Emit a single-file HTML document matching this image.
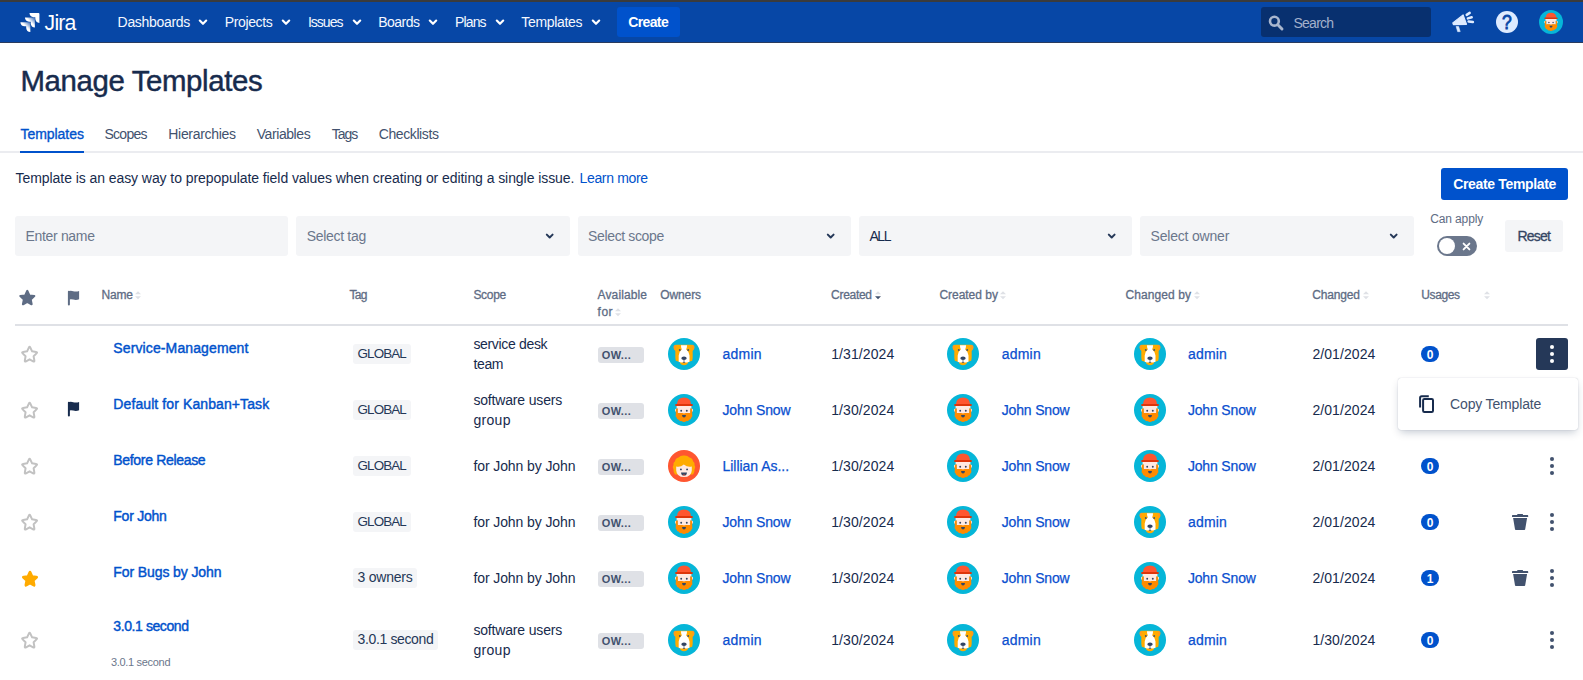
<!DOCTYPE html>
<html lang="en"><head><meta charset="utf-8"><title>Manage Templates - Jira</title>
<style>
html,body{margin:0;padding:0;background:#fff;}
body{width:1583px;height:680px;overflow:hidden;position:relative;font-family:"Liberation Sans",Arial,sans-serif;}
.t{position:absolute;white-space:nowrap;display:block;}
.b{position:absolute;display:block;}
svg{position:absolute;display:block;overflow:visible;}
</style></head><body>
<div class="b" style="left:0px;top:0px;width:1583px;height:2px;background:#3b3b3b;"></div>
<div class="b" style="left:0px;top:2px;width:1583px;height:40px;background:#0747A6;"></div>
<div class="b" style="left:0px;top:42px;width:1583px;height:1px;background:#2a3b5e;"></div>
<svg style="left:19.200px;top:10.900px" width="22" height="22" viewBox="0 0 32 32">
<defs>
<linearGradient id="jg1" x1="22.0" y1="9.7" x2="16.3" y2="15.5" gradientUnits="userSpaceOnUse"><stop offset="0.15" stop-color="#fff" stop-opacity="0.35"/><stop offset="1" stop-color="#fff"/></linearGradient>
<linearGradient id="jg2" x1="15.4" y1="16.3" x2="9.7" y2="22.1" gradientUnits="userSpaceOnUse"><stop offset="0.15" stop-color="#fff" stop-opacity="0.35"/><stop offset="1" stop-color="#fff"/></linearGradient>
</defs>
<path d="M28.5 3H15.200c0 3.300 2.700 6 6 6h2.500v2.400c0 3.300 2.700 6 6 6V4.200c0-.7-.5-1.200-1.200-1.200z" fill="#fff"/>
<path d="M21.900 9.600H8.600c0 3.300 2.700 6 6 6h2.500v2.400c0 3.300 2.700 6 6 6V10.800c0-.7-.5-1.200-1.200-1.200z" fill="url(#jg1)"/>
<path d="M15.300 16.200H2c0 3.300 2.700 6 6 6h2.500v2.400c0 3.300 2.700 6 6 6V17.400c0-.7-.6-1.200-1.200-1.200z" fill="url(#jg2)"/>
</svg>
<span class="t" style="left:44.60px;top:11px;font-size:21.2px;line-height:23px;color:#fff;letter-spacing:-0.787px;">Jira</span>
<span class="t" style="left:117.60px;top:14px;font-size:14px;line-height:16px;color:#F4F8FF;letter-spacing:-0.321px;">Dashboards</span>
<svg style="left:197.20px;top:17.65px" width="12.0" height="8.7" viewBox="-2 -2 12.0 8.7"><path d="M0.8 0.6 L4.0 3.8000000000000003 L7.2 0.6" fill="none" stroke="#fff" stroke-width="2.2" stroke-linecap="round" stroke-linejoin="round"/></svg>
<span class="t" style="left:224.70px;top:14px;font-size:14px;line-height:16px;color:#F4F8FF;letter-spacing:-0.353px;">Projects</span>
<svg style="left:280.00px;top:17.65px" width="12.0" height="8.7" viewBox="-2 -2 12.0 8.7"><path d="M0.8 0.6 L4.0 3.8000000000000003 L7.2 0.6" fill="none" stroke="#fff" stroke-width="2.2" stroke-linecap="round" stroke-linejoin="round"/></svg>
<span class="t" style="left:307.90px;top:14px;font-size:14px;line-height:16px;color:#F4F8FF;letter-spacing:-0.972px;">Issues</span>
<svg style="left:351.00px;top:17.65px" width="12.0" height="8.7" viewBox="-2 -2 12.0 8.7"><path d="M0.8 0.6 L4.0 3.8000000000000003 L7.2 0.6" fill="none" stroke="#fff" stroke-width="2.2" stroke-linecap="round" stroke-linejoin="round"/></svg>
<span class="t" style="left:378.20px;top:14px;font-size:14px;line-height:16px;color:#F4F8FF;letter-spacing:-0.532px;">Boards</span>
<svg style="left:427.20px;top:17.65px" width="12.0" height="8.7" viewBox="-2 -2 12.0 8.7"><path d="M0.8 0.6 L4.0 3.8000000000000003 L7.2 0.6" fill="none" stroke="#fff" stroke-width="2.2" stroke-linecap="round" stroke-linejoin="round"/></svg>
<span class="t" style="left:455.00px;top:14px;font-size:14px;line-height:16px;color:#F4F8FF;letter-spacing:-0.855px;">Plans</span>
<svg style="left:493.50px;top:17.65px" width="12.0" height="8.7" viewBox="-2 -2 12.0 8.7"><path d="M0.8 0.6 L4.0 3.8000000000000003 L7.2 0.6" fill="none" stroke="#fff" stroke-width="2.2" stroke-linecap="round" stroke-linejoin="round"/></svg>
<span class="t" style="left:521.30px;top:14px;font-size:14px;line-height:16px;color:#F4F8FF;letter-spacing:-0.326px;">Templates</span>
<svg style="left:589.50px;top:17.65px" width="12.0" height="8.7" viewBox="-2 -2 12.0 8.7"><path d="M0.8 0.6 L4.0 3.8000000000000003 L7.2 0.6" fill="none" stroke="#fff" stroke-width="2.2" stroke-linecap="round" stroke-linejoin="round"/></svg>
<div class="b" style="left:617px;top:7px;width:63px;height:30px;background:#0052CC;border-radius:3px;"></div>
<span class="t" style="left:628.20px;top:14px;font-size:14px;line-height:16px;color:#fff;font-weight:700;letter-spacing:-0.616px;">Create</span>
<div class="b" style="left:1261px;top:7px;width:170px;height:30px;background:#08306F;border-radius:3px;"></div>
<svg style="left:1267px;top:14px" width="18" height="18" viewBox="0 0 18 18"><circle cx="7.4" cy="7.2" r="4.4" fill="none" stroke="#A9B6CE" stroke-width="2.600"/><path d="M10.800 10.700 L15 15" stroke="#A9B6CE" stroke-width="2.900" stroke-linecap="round"/></svg>
<span class="t" style="left:1293.50px;top:15px;font-size:14px;line-height:16px;color:#A3B1CB;letter-spacing:-0.752px;">Search</span>
<svg style="left:1448px;top:8px" width="30" height="28" viewBox="1448 8 30 28">
<path d="M1452.800 22.900 L1463.100 14.900 L1466.500 24.300 L1453.400 24.600 Z" fill="#DEEBFF" stroke="#DEEBFF" stroke-width="1.200" stroke-linejoin="round"/>
<path d="M1456.100 26.500 L1458.600 26.500 L1460.200 31.600 L1457.700 31.700 Z" fill="#DEEBFF" stroke="#DEEBFF" stroke-width="0.6" stroke-linejoin="round"/>
<path d="M1466.700 14.900 L1469.700 12.900 M1467.900 18.400 L1471.700 17.300 M1468.600 21.400 L1472.900 22.100" stroke="#DEEBFF" stroke-width="2.500" stroke-linecap="round" fill="none"/>
</svg>
<div class="b" style="left:1496.200px;top:11.100px;width:21.8px;height:21.8px;border-radius:50%;background:#DEEBFF"></div>
<span class="t" style="left:1502.10px;top:11px;font-size:19.5px;line-height:22px;color:#0747A6;-webkit-text-stroke:0.8px #0747A6;transform:scaleX(0.9);transform-origin:0 0;">?</span>
<svg style="left:1539.00px;top:9.80px" width="24" height="24" viewBox="0 0 32 32">
<circle cx="16" cy="16" r="16" fill="#06B6D8"/>
<rect x="7" y="14.800" width="2.200" height="3" rx="1" fill="#FFE3DA"/><rect x="22.800" y="14.800" width="2.200" height="3" rx="1" fill="#FFE3DA"/>
<path d="M8.300 14.200 L9.900 14.200 L9.900 19 L22.100 19 L22.100 14.200 L23.700 14.200 Q24.600 17 24.200 20.500 Q25 22.500 23.400 23.600 Q23.300 25.600 21.200 25.800 Q20.500 27.500 18.500 27.100 Q16 29 13.500 27.100 Q11.500 27.500 10.800 25.800 Q8.700 25.600 8.600 23.600 Q7 22.500 7.800 20.500 Q7.400 17 8.300 14.200 Z" fill="#FF8B00"/>
<rect x="8.600" y="11.800" width="14.800" height="2.600" fill="#FFE9E2"/><rect x="9.900" y="11.800" width="12.200" height="7.600" fill="#FFE9E2"/>
<path d="M9.900 19 L14.300 19 Q16 20.800 17.700 19 L22.100 19 L22.100 20 L9.900 20 Z" fill="#FF8B00"/>
<path d="M8.900 10.300 Q9.300 3.500 16 3.500 Q22.700 3.500 23.100 10.300 Z" fill="#FF5630"/>
<rect x="7.200" y="10.100" width="17.600" height="2" rx="0.8" fill="#DE350B"/>
<circle cx="13.200" cy="16.700" r="0.95" fill="#344563"/><circle cx="18.800" cy="16.700" r="0.95" fill="#344563"/>
<path d="M14 21 L18 21 Q17.800 23.500 16 23.500 Q14.200 23.500 14 21 Z" fill="#344563"/>
</svg>
<span class="t" style="left:20.40px;top:64px;font-size:29.4px;line-height:33px;color:#172B4D;letter-spacing:-0.365px;-webkit-text-stroke:0.45px #172B4D;">Manage Templates</span>
<div class="b" style="left:0px;top:151px;width:1583px;height:2px;background:#EBECF0;"></div>
<div class="b" style="left:20px;top:151px;width:64px;height:2px;background:#0052CC;"></div>
<span class="t" style="left:20.50px;top:126px;font-size:14px;line-height:16px;color:#0052CC;letter-spacing:-0.051px;-webkit-text-stroke:0.35px #0052CC;">Templates</span>
<span class="t" style="left:104.40px;top:126px;font-size:14px;line-height:16px;color:#42526E;letter-spacing:-0.699px;">Scopes</span>
<span class="t" style="left:168.30px;top:126px;font-size:14px;line-height:16px;color:#42526E;letter-spacing:-0.310px;">Hierarchies</span>
<span class="t" style="left:256.70px;top:126px;font-size:14px;line-height:16px;color:#42526E;letter-spacing:-0.416px;">Variables</span>
<span class="t" style="left:331.80px;top:126px;font-size:14px;line-height:16px;color:#42526E;letter-spacing:-1.057px;">Tags</span>
<span class="t" style="left:378.70px;top:126px;font-size:14px;line-height:16px;color:#42526E;letter-spacing:-0.399px;">Checklists</span>
<span class="t" style="left:15.60px;top:170px;font-size:14px;line-height:16px;color:#172B4D;letter-spacing:-0.068px;">Template is an easy way to prepopulate field values when creating or editing a single issue.</span>
<span class="t" style="left:579.50px;top:170px;font-size:14px;line-height:16px;color:#0052CC;letter-spacing:-0.344px;">Learn more</span>
<div class="b" style="left:1441px;top:168px;width:127px;height:32px;background:#0052CC;border-radius:3px;"></div>
<span class="t" style="left:1453.20px;top:176px;font-size:14px;line-height:16px;color:#fff;font-weight:700;letter-spacing:-0.342px;">Create Template</span>
<div class="b" style="left:15px;top:216px;width:273px;height:40px;background:#F4F5F7;border-radius:3px;"></div>
<span class="t" style="left:25.40px;top:228px;font-size:14px;line-height:16px;color:#6B778C;letter-spacing:-0.308px;">Enter name</span>
<div class="b" style="left:296px;top:216px;width:274px;height:40px;background:#F4F5F7;border-radius:3px;"></div>
<span class="t" style="left:306.80px;top:228px;font-size:14px;line-height:16px;color:#6B778C;letter-spacing:-0.318px;">Select tag</span>
<svg style="left:544.40px;top:232.30px" width="11.4" height="8.4" viewBox="-2 -2 11.4 8.4"><path d="M0.8 0.6 L3.7 3.5000000000000004 L6.6000000000000005 0.6" fill="none" stroke="#253858" stroke-width="2.0" stroke-linecap="round" stroke-linejoin="round"/></svg>
<div class="b" style="left:578px;top:216px;width:273px;height:40px;background:#F4F5F7;border-radius:3px;"></div>
<span class="t" style="left:588.10px;top:228px;font-size:14px;line-height:16px;color:#6B778C;letter-spacing:-0.369px;">Select scope</span>
<svg style="left:825.40px;top:232.30px" width="11.4" height="8.4" viewBox="-2 -2 11.4 8.4"><path d="M0.8 0.6 L3.7 3.5000000000000004 L6.6000000000000005 0.6" fill="none" stroke="#253858" stroke-width="2.0" stroke-linecap="round" stroke-linejoin="round"/></svg>
<div class="b" style="left:859px;top:216px;width:273px;height:40px;background:#F4F5F7;border-radius:3px;"></div>
<span class="t" style="left:869.40px;top:228px;font-size:14px;line-height:16px;color:#172B4D;letter-spacing:-1.405px;">ALL</span>
<svg style="left:1106.40px;top:232.30px" width="11.4" height="8.4" viewBox="-2 -2 11.4 8.4"><path d="M0.8 0.6 L3.7 3.5000000000000004 L6.6000000000000005 0.6" fill="none" stroke="#253858" stroke-width="2.0" stroke-linecap="round" stroke-linejoin="round"/></svg>
<div class="b" style="left:1140px;top:216px;width:274px;height:40px;background:#F4F5F7;border-radius:3px;"></div>
<span class="t" style="left:1150.60px;top:228px;font-size:14px;line-height:16px;color:#6B778C;letter-spacing:-0.203px;">Select owner</span>
<svg style="left:1388.40px;top:232.30px" width="11.4" height="8.4" viewBox="-2 -2 11.4 8.4"><path d="M0.8 0.6 L3.7 3.5000000000000004 L6.6000000000000005 0.6" fill="none" stroke="#253858" stroke-width="2.0" stroke-linecap="round" stroke-linejoin="round"/></svg>
<span class="t" style="left:1430.20px;top:212px;font-size:12px;line-height:14px;color:#5E6C84;letter-spacing:-0.117px;">Can apply</span>
<div class="b" style="left:1437px;top:236px;width:40px;height:20px;background:#6B778C;border-radius:10px;"></div>
<div class="b" style="left:1438.800px;top:237.600px;width:16.500px;height:16.500px;border-radius:50%;background:#fff"></div>
<svg style="left:1460.800px;top:240.600px" width="11" height="11" viewBox="0 0 11 11"><path d="M2.600 2.600 L8.400 8.400 M8.400 2.600 L2.600 8.400" stroke="#fff" stroke-width="1.900" stroke-linecap="round"/></svg>
<div class="b" style="left:1505px;top:220px;width:58px;height:32px;background:#F4F5F7;border-radius:3px;"></div>
<span class="t" style="left:1517.40px;top:228px;font-size:14px;line-height:16px;color:#344563;letter-spacing:-0.768px;-webkit-text-stroke:0.3px #344563;">Reset</span>
<svg style="left:16.60px;top:288.45px" width="20.60" height="20.60" viewBox="16.60 288.45 20.60 20.60"><path d="M26.90 291.45 L28.96 295.92 L33.84 296.49 L30.23 299.83 L31.19 304.66 L26.90 302.25 L22.61 304.66 L23.57 299.83 L19.96 296.49 L24.84 295.92 Z" fill="#5E6C84" stroke="#5E6C84" stroke-width="2.2" stroke-linejoin="round"/></svg>
<svg style="left:66.8px;top:289.6px" width="14" height="17" viewBox="0 0 14 17"><path d="M1.900 1.800 L1.900 14.500" stroke="#5E6C84" stroke-width="2.000" stroke-linecap="round"/><path d="M1.400 1.300 Q3.500 0.500 6.200 1.200 Q9.300 2.000 12.100 0.900 L12.100 9.300 Q9.300 10.400 6.200 9.600 Q3.500 8.900 1.400 9.800 Z" fill="#5E6C84"/></svg>
<span class="t" style="left:101.50px;top:288px;font-size:12px;line-height:14px;color:#5E6C84;letter-spacing:-0.170px;-webkit-text-stroke:0.3px #5E6C84;">Name</span>
<svg style="left:135.3px;top:291px" width="6" height="9" viewBox="0 0 6 9"><path d="M0 3.200 L3 0.300 L6 3.200 Z" fill="#DFE1E6"/><path d="M0 5.300 L3 8.300 L6 5.300 Z" fill="#DFE1E6"/></svg>
<span class="t" style="left:349.40px;top:288px;font-size:12px;line-height:14px;color:#5E6C84;letter-spacing:-0.624px;-webkit-text-stroke:0.3px #5E6C84;">Tag</span>
<span class="t" style="left:473.40px;top:288px;font-size:12px;line-height:14px;color:#5E6C84;letter-spacing:-0.306px;-webkit-text-stroke:0.3px #5E6C84;">Scope</span>
<span class="t" style="left:597.60px;top:288px;font-size:12px;line-height:14px;color:#5E6C84;letter-spacing:0.115px;-webkit-text-stroke:0.3px #5E6C84;">Available</span>
<span class="t" style="left:597.60px;top:305px;font-size:12px;line-height:14px;color:#5E6C84;letter-spacing:0.498px;-webkit-text-stroke:0.3px #5E6C84;">for</span>
<svg style="left:614.5px;top:308px" width="6" height="9" viewBox="0 0 6 9"><path d="M0 3.200 L3 0.300 L6 3.200 Z" fill="#DFE1E6"/><path d="M0 5.300 L3 8.300 L6 5.300 Z" fill="#DFE1E6"/></svg>
<span class="t" style="left:660.30px;top:288px;font-size:12px;line-height:14px;color:#5E6C84;letter-spacing:-0.129px;-webkit-text-stroke:0.3px #5E6C84;">Owners</span>
<span class="t" style="left:831.10px;top:288px;font-size:12px;line-height:14px;color:#5E6C84;letter-spacing:-0.299px;-webkit-text-stroke:0.3px #5E6C84;">Created</span>
<svg style="left:875px;top:291px" width="6" height="9" viewBox="0 0 6 9"><path d="M0 3.200 L3 0.300 L6 3.200 Z" fill="#DFE1E6"/><path d="M0 5.300 L3 8.300 L6 5.300 Z" fill="#42526E"/></svg>
<span class="t" style="left:939.40px;top:288px;font-size:12px;line-height:14px;color:#5E6C84;letter-spacing:-0.022px;-webkit-text-stroke:0.3px #5E6C84;">Created by</span>
<svg style="left:1000.4px;top:291px" width="6" height="9" viewBox="0 0 6 9"><path d="M0 3.200 L3 0.300 L6 3.200 Z" fill="#DFE1E6"/><path d="M0 5.300 L3 8.300 L6 5.300 Z" fill="#DFE1E6"/></svg>
<span class="t" style="left:1125.60px;top:288px;font-size:12px;line-height:14px;color:#5E6C84;letter-spacing:0.076px;-webkit-text-stroke:0.3px #5E6C84;">Changed by</span>
<svg style="left:1193.5px;top:291px" width="6" height="9" viewBox="0 0 6 9"><path d="M0 3.200 L3 0.300 L6 3.200 Z" fill="#DFE1E6"/><path d="M0 5.300 L3 8.300 L6 5.300 Z" fill="#DFE1E6"/></svg>
<span class="t" style="left:1312.30px;top:288px;font-size:12px;line-height:14px;color:#5E6C84;letter-spacing:-0.168px;-webkit-text-stroke:0.3px #5E6C84;">Changed</span>
<svg style="left:1362.5px;top:291px" width="6" height="9" viewBox="0 0 6 9"><path d="M0 3.200 L3 0.300 L6 3.200 Z" fill="#DFE1E6"/><path d="M0 5.300 L3 8.300 L6 5.300 Z" fill="#DFE1E6"/></svg>
<span class="t" style="left:1421.30px;top:288px;font-size:12px;line-height:14px;color:#5E6C84;letter-spacing:-0.398px;-webkit-text-stroke:0.3px #5E6C84;">Usages</span>
<svg style="left:1484px;top:291px" width="6" height="9" viewBox="0 0 6 9"><path d="M0 3.200 L3 0.300 L6 3.200 Z" fill="#DFE1E6"/><path d="M0 5.300 L3 8.300 L6 5.300 Z" fill="#DFE1E6"/></svg>
<div class="b" style="left:15px;top:324px;width:1553px;height:2px;background:#DFE1E6;"></div>
<svg style="left:18.05px;top:343.46px" width="23.20" height="23.89" viewBox="18.05 343.46 23.20 23.89"><path d="M28.90 348.07 Q29.65 346.46 30.40 348.07 L32.15 351.82 L36.12 352.39 Q37.83 352.64 36.59 353.88 L33.69 356.77 L34.40 360.87 Q34.70 362.64 33.19 361.79 L29.65 359.82 L26.11 361.79 Q24.60 362.64 24.90 360.87 L25.61 356.77 L22.71 353.88 Q21.47 352.64 23.18 352.39 L27.15 351.82 Z" fill="#fff" stroke="#C2C2C2" stroke-width="2.0" stroke-linejoin="round"/></svg>
<span class="t" style="left:113.30px;top:340px;font-size:14px;line-height:16px;color:#0052CC;letter-spacing:0.120px;-webkit-text-stroke:0.42px #0052CC;">Service-Management</span>
<div class="b" style="left:353px;top:344px;width:58px;height:20px;background:#F4F5F7;border-radius:3px;"></div>
<span class="t" style="left:357.60px;top:346px;font-size:13.4px;line-height:15px;color:#253858;letter-spacing:-0.905px;">GLOBAL</span>
<span class="t" style="left:473.40px;top:336px;font-size:14px;line-height:16px;color:#172B4D;letter-spacing:-0.328px;">service desk</span>
<span class="t" style="left:473.40px;top:356px;font-size:14px;line-height:16px;color:#172B4D;letter-spacing:-0.341px;">team</span>
<div class="b" style="left:598px;top:347.4px;width:46px;height:15.200000000000045px;background:#DFE1E6;border-radius:3px;"></div>
<span class="t" style="left:601.80px;top:349px;font-size:11px;line-height:12px;color:#42526E;font-weight:700;letter-spacing:0.350px;">OW...</span>
<svg style="left:668.00px;top:338.00px" width="32" height="32" viewBox="0 0 32 32">
<circle cx="16" cy="16" r="16" fill="#06B6D8"/>
<path d="M8.600 6.800 Q5.300 6.300 5.500 9.800 Q5.800 12.500 7.900 12.900 L9.200 9 Z" fill="#FF991F"/>
<path d="M23.400 6.800 Q26.700 6.300 26.500 9.800 Q26.200 12.500 24.100 12.900 L22.800 9 Z" fill="#FF991F"/>
<path d="M8 7.200 Q8.400 6.600 9.500 6.700 L22.500 6.700 Q23.600 6.600 24 7.200 Q24.900 11.500 24.700 16.500 Q24.900 20.500 24.200 22.800 L20.300 24.100 Q19.800 27.200 16 27.300 Q12.200 27.200 11.700 24.100 L7.800 22.800 Q7.100 20.500 7.300 16.500 Q7.100 11.500 8 7.200 Z" fill="#FFAB00"/>
<path d="M12.900 7.300 L19.100 7.300 Q19 9.800 18.100 11.300 Q21.300 14 21.500 17.500 L21.500 23.800 L19 24.400 L13 24.400 L10.700 23.800 L10.700 17.500 Q10.800 14 13.900 11.300 Q13 9.800 12.900 7.300 Z" fill="#fff"/>
<circle cx="11.800" cy="12" r="0.95" fill="#42526E"/><circle cx="20.200" cy="12" r="0.95" fill="#42526E"/>
<ellipse cx="16" cy="20.200" rx="2.700" ry="1.700" fill="#344563"/>
<path d="M16 21.500 L16 24" stroke="#344563" stroke-width="0.7"/>
<path d="M14.400 24.100 Q16 25.700 17.600 24.100 Z" fill="#344563"/>
</svg>
<span class="t" style="left:722.50px;top:346px;font-size:14px;line-height:16px;color:#0A4FCF;letter-spacing:0.217px;-webkit-text-stroke:0.25px #0A4FCF;">admin</span>
<span class="t" style="left:831.20px;top:346px;font-size:14px;line-height:16px;color:#172B4D;letter-spacing:0.090px;">1/31/2024</span>
<svg style="left:947.00px;top:338.00px" width="32" height="32" viewBox="0 0 32 32">
<circle cx="16" cy="16" r="16" fill="#06B6D8"/>
<path d="M8.600 6.800 Q5.300 6.300 5.500 9.800 Q5.800 12.500 7.900 12.900 L9.200 9 Z" fill="#FF991F"/>
<path d="M23.400 6.800 Q26.700 6.300 26.500 9.800 Q26.200 12.500 24.100 12.900 L22.800 9 Z" fill="#FF991F"/>
<path d="M8 7.200 Q8.400 6.600 9.500 6.700 L22.500 6.700 Q23.600 6.600 24 7.200 Q24.900 11.500 24.700 16.500 Q24.900 20.500 24.200 22.800 L20.300 24.100 Q19.800 27.200 16 27.300 Q12.200 27.200 11.700 24.100 L7.800 22.800 Q7.100 20.500 7.300 16.500 Q7.100 11.500 8 7.200 Z" fill="#FFAB00"/>
<path d="M12.900 7.300 L19.100 7.300 Q19 9.800 18.100 11.300 Q21.300 14 21.500 17.500 L21.500 23.800 L19 24.400 L13 24.400 L10.700 23.800 L10.700 17.500 Q10.800 14 13.900 11.300 Q13 9.800 12.900 7.300 Z" fill="#fff"/>
<circle cx="11.800" cy="12" r="0.95" fill="#42526E"/><circle cx="20.200" cy="12" r="0.95" fill="#42526E"/>
<ellipse cx="16" cy="20.200" rx="2.700" ry="1.700" fill="#344563"/>
<path d="M16 21.500 L16 24" stroke="#344563" stroke-width="0.7"/>
<path d="M14.400 24.100 Q16 25.700 17.600 24.100 Z" fill="#344563"/>
</svg>
<span class="t" style="left:1001.70px;top:346px;font-size:14px;line-height:16px;color:#0A4FCF;letter-spacing:0.217px;-webkit-text-stroke:0.25px #0A4FCF;">admin</span>
<svg style="left:1134.00px;top:338.00px" width="32" height="32" viewBox="0 0 32 32">
<circle cx="16" cy="16" r="16" fill="#06B6D8"/>
<path d="M8.600 6.800 Q5.300 6.300 5.500 9.800 Q5.800 12.500 7.900 12.900 L9.200 9 Z" fill="#FF991F"/>
<path d="M23.400 6.800 Q26.700 6.300 26.500 9.800 Q26.200 12.500 24.100 12.900 L22.800 9 Z" fill="#FF991F"/>
<path d="M8 7.200 Q8.400 6.600 9.500 6.700 L22.500 6.700 Q23.600 6.600 24 7.200 Q24.900 11.500 24.700 16.500 Q24.900 20.500 24.200 22.800 L20.300 24.100 Q19.800 27.200 16 27.300 Q12.200 27.200 11.700 24.100 L7.800 22.800 Q7.100 20.500 7.300 16.500 Q7.100 11.500 8 7.200 Z" fill="#FFAB00"/>
<path d="M12.900 7.300 L19.100 7.300 Q19 9.800 18.100 11.300 Q21.300 14 21.500 17.500 L21.500 23.800 L19 24.400 L13 24.400 L10.700 23.800 L10.700 17.500 Q10.800 14 13.900 11.300 Q13 9.800 12.900 7.300 Z" fill="#fff"/>
<circle cx="11.800" cy="12" r="0.95" fill="#42526E"/><circle cx="20.200" cy="12" r="0.95" fill="#42526E"/>
<ellipse cx="16" cy="20.200" rx="2.700" ry="1.700" fill="#344563"/>
<path d="M16 21.500 L16 24" stroke="#344563" stroke-width="0.7"/>
<path d="M14.400 24.100 Q16 25.700 17.600 24.100 Z" fill="#344563"/>
</svg>
<span class="t" style="left:1187.90px;top:346px;font-size:14px;line-height:16px;color:#0A4FCF;letter-spacing:0.217px;-webkit-text-stroke:0.25px #0A4FCF;">admin</span>
<span class="t" style="left:1312.40px;top:346px;font-size:14px;line-height:16px;color:#172B4D;letter-spacing:0.077px;">2/01/2024</span>
<div class="b" style="left:1421px;top:346px;width:18px;height:16px;background:#0052CC;border-radius:8px;"></div>
<span class="t" style="left:1426.70px;top:348px;font-size:12px;line-height:14px;color:#fff;font-weight:700;">0</span>
<div class="b" style="left:1536px;top:338px;width:32px;height:32px;background:#253858;border-radius:3px;"></div>
<svg style="left:1549px;top:344px" width="6" height="20" viewBox="0 0 6 20"><circle cx="3" cy="3" r="2.050" fill="#fff"/><circle cx="3" cy="10" r="2.050" fill="#fff"/><circle cx="3" cy="17" r="2.050" fill="#fff"/></svg>
<svg style="left:18.05px;top:399.46px" width="23.20" height="23.89" viewBox="18.05 399.46 23.20 23.89"><path d="M28.90 404.07 Q29.65 402.46 30.40 404.07 L32.15 407.82 L36.12 408.39 Q37.83 408.64 36.59 409.88 L33.69 412.77 L34.40 416.87 Q34.70 418.64 33.19 417.79 L29.65 415.82 L26.11 417.79 Q24.60 418.64 24.90 416.87 L25.61 412.77 L22.71 409.88 Q21.47 408.64 23.18 408.39 L27.15 407.82 Z" fill="#fff" stroke="#C2C2C2" stroke-width="2.0" stroke-linejoin="round"/></svg>
<svg style="left:66.8px;top:400.8px" width="14" height="17" viewBox="0 0 14 17"><path d="M1.900 1.800 L1.900 14.500" stroke="#172B4D" stroke-width="2.000" stroke-linecap="round"/><path d="M1.400 1.300 Q3.500 0.500 6.200 1.200 Q9.300 2.000 12.100 0.900 L12.100 9.300 Q9.300 10.400 6.200 9.600 Q3.500 8.900 1.400 9.800 Z" fill="#172B4D"/></svg>
<span class="t" style="left:113.30px;top:396px;font-size:14px;line-height:16px;color:#0052CC;letter-spacing:0.100px;-webkit-text-stroke:0.42px #0052CC;">Default for Kanban+Task</span>
<div class="b" style="left:353px;top:400px;width:58px;height:20px;background:#F4F5F7;border-radius:3px;"></div>
<span class="t" style="left:357.60px;top:402px;font-size:13.4px;line-height:15px;color:#253858;letter-spacing:-0.905px;">GLOBAL</span>
<span class="t" style="left:473.40px;top:392px;font-size:14px;line-height:16px;color:#172B4D;letter-spacing:-0.164px;">software users</span>
<span class="t" style="left:473.40px;top:412px;font-size:14px;line-height:16px;color:#172B4D;letter-spacing:0.323px;">group</span>
<div class="b" style="left:598px;top:403.4px;width:46px;height:15.200000000000045px;background:#DFE1E6;border-radius:3px;"></div>
<span class="t" style="left:601.80px;top:405px;font-size:11px;line-height:12px;color:#42526E;font-weight:700;letter-spacing:0.350px;">OW...</span>
<svg style="left:668.00px;top:394.00px" width="32" height="32" viewBox="0 0 32 32">
<circle cx="16" cy="16" r="16" fill="#06B6D8"/>
<rect x="7" y="14.800" width="2.200" height="3" rx="1" fill="#FFE3DA"/><rect x="22.800" y="14.800" width="2.200" height="3" rx="1" fill="#FFE3DA"/>
<path d="M8.300 14.200 L9.900 14.200 L9.900 19 L22.100 19 L22.100 14.200 L23.700 14.200 Q24.600 17 24.200 20.500 Q25 22.500 23.400 23.600 Q23.300 25.600 21.200 25.800 Q20.500 27.500 18.500 27.100 Q16 29 13.500 27.100 Q11.500 27.500 10.800 25.800 Q8.700 25.600 8.600 23.600 Q7 22.500 7.800 20.500 Q7.400 17 8.300 14.200 Z" fill="#FF8B00"/>
<rect x="8.600" y="11.800" width="14.800" height="2.600" fill="#FFE9E2"/><rect x="9.900" y="11.800" width="12.200" height="7.600" fill="#FFE9E2"/>
<path d="M9.900 19 L14.300 19 Q16 20.800 17.700 19 L22.100 19 L22.100 20 L9.900 20 Z" fill="#FF8B00"/>
<path d="M8.900 10.300 Q9.300 3.500 16 3.500 Q22.700 3.500 23.100 10.300 Z" fill="#FF5630"/>
<rect x="7.200" y="10.100" width="17.600" height="2" rx="0.8" fill="#DE350B"/>
<circle cx="13.200" cy="16.700" r="0.95" fill="#344563"/><circle cx="18.800" cy="16.700" r="0.95" fill="#344563"/>
<path d="M14 21 L18 21 Q17.800 23.500 16 23.500 Q14.200 23.500 14 21 Z" fill="#344563"/>
</svg>
<span class="t" style="left:722.50px;top:402px;font-size:14px;line-height:16px;color:#0A4FCF;letter-spacing:-0.159px;-webkit-text-stroke:0.25px #0A4FCF;">John Snow</span>
<span class="t" style="left:831.20px;top:402px;font-size:14px;line-height:16px;color:#172B4D;letter-spacing:0.090px;">1/30/2024</span>
<svg style="left:947.00px;top:394.00px" width="32" height="32" viewBox="0 0 32 32">
<circle cx="16" cy="16" r="16" fill="#06B6D8"/>
<rect x="7" y="14.800" width="2.200" height="3" rx="1" fill="#FFE3DA"/><rect x="22.800" y="14.800" width="2.200" height="3" rx="1" fill="#FFE3DA"/>
<path d="M8.300 14.200 L9.900 14.200 L9.900 19 L22.100 19 L22.100 14.200 L23.700 14.200 Q24.600 17 24.200 20.500 Q25 22.500 23.400 23.600 Q23.300 25.600 21.200 25.800 Q20.500 27.500 18.500 27.100 Q16 29 13.500 27.100 Q11.500 27.500 10.800 25.800 Q8.700 25.600 8.600 23.600 Q7 22.500 7.800 20.500 Q7.400 17 8.300 14.200 Z" fill="#FF8B00"/>
<rect x="8.600" y="11.800" width="14.800" height="2.600" fill="#FFE9E2"/><rect x="9.900" y="11.800" width="12.200" height="7.600" fill="#FFE9E2"/>
<path d="M9.900 19 L14.300 19 Q16 20.800 17.700 19 L22.100 19 L22.100 20 L9.900 20 Z" fill="#FF8B00"/>
<path d="M8.900 10.300 Q9.300 3.500 16 3.500 Q22.700 3.500 23.100 10.300 Z" fill="#FF5630"/>
<rect x="7.200" y="10.100" width="17.600" height="2" rx="0.8" fill="#DE350B"/>
<circle cx="13.200" cy="16.700" r="0.95" fill="#344563"/><circle cx="18.800" cy="16.700" r="0.95" fill="#344563"/>
<path d="M14 21 L18 21 Q17.800 23.500 16 23.500 Q14.200 23.500 14 21 Z" fill="#344563"/>
</svg>
<span class="t" style="left:1001.70px;top:402px;font-size:14px;line-height:16px;color:#0A4FCF;letter-spacing:-0.159px;-webkit-text-stroke:0.25px #0A4FCF;">John Snow</span>
<svg style="left:1134.00px;top:394.00px" width="32" height="32" viewBox="0 0 32 32">
<circle cx="16" cy="16" r="16" fill="#06B6D8"/>
<rect x="7" y="14.800" width="2.200" height="3" rx="1" fill="#FFE3DA"/><rect x="22.800" y="14.800" width="2.200" height="3" rx="1" fill="#FFE3DA"/>
<path d="M8.300 14.200 L9.900 14.200 L9.900 19 L22.100 19 L22.100 14.200 L23.700 14.200 Q24.600 17 24.200 20.500 Q25 22.500 23.400 23.600 Q23.300 25.600 21.200 25.800 Q20.500 27.500 18.500 27.100 Q16 29 13.500 27.100 Q11.500 27.500 10.800 25.800 Q8.700 25.600 8.600 23.600 Q7 22.500 7.800 20.500 Q7.400 17 8.300 14.200 Z" fill="#FF8B00"/>
<rect x="8.600" y="11.800" width="14.800" height="2.600" fill="#FFE9E2"/><rect x="9.900" y="11.800" width="12.200" height="7.600" fill="#FFE9E2"/>
<path d="M9.900 19 L14.300 19 Q16 20.800 17.700 19 L22.100 19 L22.100 20 L9.900 20 Z" fill="#FF8B00"/>
<path d="M8.900 10.300 Q9.300 3.500 16 3.500 Q22.700 3.500 23.100 10.300 Z" fill="#FF5630"/>
<rect x="7.200" y="10.100" width="17.600" height="2" rx="0.8" fill="#DE350B"/>
<circle cx="13.200" cy="16.700" r="0.95" fill="#344563"/><circle cx="18.800" cy="16.700" r="0.95" fill="#344563"/>
<path d="M14 21 L18 21 Q17.800 23.500 16 23.500 Q14.200 23.500 14 21 Z" fill="#344563"/>
</svg>
<span class="t" style="left:1187.90px;top:402px;font-size:14px;line-height:16px;color:#0A4FCF;letter-spacing:-0.159px;-webkit-text-stroke:0.25px #0A4FCF;">John Snow</span>
<span class="t" style="left:1312.40px;top:402px;font-size:14px;line-height:16px;color:#172B4D;letter-spacing:0.077px;">2/01/2024</span>
<svg style="left:18.05px;top:455.46px" width="23.20" height="23.89" viewBox="18.05 455.46 23.20 23.89"><path d="M28.90 460.07 Q29.65 458.46 30.40 460.07 L32.15 463.82 L36.12 464.39 Q37.83 464.64 36.59 465.88 L33.69 468.77 L34.40 472.87 Q34.70 474.64 33.19 473.79 L29.65 471.82 L26.11 473.79 Q24.60 474.64 24.90 472.87 L25.61 468.77 L22.71 465.88 Q21.47 464.64 23.18 464.39 L27.15 463.82 Z" fill="#fff" stroke="#C2C2C2" stroke-width="2.0" stroke-linejoin="round"/></svg>
<span class="t" style="left:113.30px;top:452px;font-size:14px;line-height:16px;color:#0052CC;letter-spacing:-0.323px;-webkit-text-stroke:0.42px #0052CC;">Before Release</span>
<div class="b" style="left:353px;top:456px;width:58px;height:20px;background:#F4F5F7;border-radius:3px;"></div>
<span class="t" style="left:357.60px;top:458px;font-size:13.4px;line-height:15px;color:#253858;letter-spacing:-0.905px;">GLOBAL</span>
<span class="t" style="left:473.40px;top:458px;font-size:14px;line-height:16px;color:#172B4D;letter-spacing:-0.094px;">for John by John</span>
<div class="b" style="left:598px;top:459.4px;width:46px;height:15.200000000000045px;background:#DFE1E6;border-radius:3px;"></div>
<span class="t" style="left:601.80px;top:461px;font-size:11px;line-height:12px;color:#42526E;font-weight:700;letter-spacing:0.350px;">OW...</span>
<svg style="left:668.00px;top:450.00px" width="32" height="32" viewBox="0 0 32 32">
<circle cx="16" cy="16" r="16" fill="#FF5630"/>
<path d="M16 5.600 Q19.500 5.400 21.500 7.600 Q24.500 8.200 25 11.300 Q27.200 12.800 26.500 15 Q28.300 17.300 26.500 19.600 Q26.800 22.500 25 24.400 L7 24.400 Q5.200 22.500 5.500 19.600 Q3.700 17.300 5.500 15 Q4.800 12.800 7 11.300 Q7.500 8.200 10.500 7.600 Q12.500 5.400 16 5.600 Z" fill="#FFAB00"/>
<path d="M8.200 16.500 Q12.500 17.500 15.800 14.500 Q19.500 17.500 23.800 16.500 L23.800 20.500 Q23.300 27 16 27.100 Q8.700 27 8.200 20.500 Z" fill="#FFE9E2"/>
<circle cx="12.900" cy="19.400" r="0.95" fill="#344563"/><circle cx="19.100" cy="19.400" r="0.95" fill="#344563"/>
<path d="M13 22.400 L19 22.400 Q18.600 25.600 16 25.600 Q13.400 25.600 13 22.400 Z" fill="#344563"/>
<path d="M14.700 24.900 Q16 23.900 17.300 24.900 Q16 25.900 14.700 24.900 Z" fill="#FF5630"/>
</svg>
<span class="t" style="left:722.50px;top:458px;font-size:14px;line-height:16px;color:#0A4FCF;letter-spacing:-0.027px;-webkit-text-stroke:0.25px #0A4FCF;">Lillian As...</span>
<span class="t" style="left:831.20px;top:458px;font-size:14px;line-height:16px;color:#172B4D;letter-spacing:0.090px;">1/30/2024</span>
<svg style="left:947.00px;top:450.00px" width="32" height="32" viewBox="0 0 32 32">
<circle cx="16" cy="16" r="16" fill="#06B6D8"/>
<rect x="7" y="14.800" width="2.200" height="3" rx="1" fill="#FFE3DA"/><rect x="22.800" y="14.800" width="2.200" height="3" rx="1" fill="#FFE3DA"/>
<path d="M8.300 14.200 L9.900 14.200 L9.900 19 L22.100 19 L22.100 14.200 L23.700 14.200 Q24.600 17 24.200 20.500 Q25 22.500 23.400 23.600 Q23.300 25.600 21.200 25.800 Q20.500 27.500 18.500 27.100 Q16 29 13.500 27.100 Q11.500 27.500 10.800 25.800 Q8.700 25.600 8.600 23.600 Q7 22.500 7.800 20.500 Q7.400 17 8.300 14.200 Z" fill="#FF8B00"/>
<rect x="8.600" y="11.800" width="14.800" height="2.600" fill="#FFE9E2"/><rect x="9.900" y="11.800" width="12.200" height="7.600" fill="#FFE9E2"/>
<path d="M9.900 19 L14.300 19 Q16 20.800 17.700 19 L22.100 19 L22.100 20 L9.900 20 Z" fill="#FF8B00"/>
<path d="M8.900 10.300 Q9.300 3.500 16 3.500 Q22.700 3.500 23.100 10.300 Z" fill="#FF5630"/>
<rect x="7.200" y="10.100" width="17.600" height="2" rx="0.8" fill="#DE350B"/>
<circle cx="13.200" cy="16.700" r="0.95" fill="#344563"/><circle cx="18.800" cy="16.700" r="0.95" fill="#344563"/>
<path d="M14 21 L18 21 Q17.800 23.500 16 23.500 Q14.200 23.500 14 21 Z" fill="#344563"/>
</svg>
<span class="t" style="left:1001.70px;top:458px;font-size:14px;line-height:16px;color:#0A4FCF;letter-spacing:-0.159px;-webkit-text-stroke:0.25px #0A4FCF;">John Snow</span>
<svg style="left:1134.00px;top:450.00px" width="32" height="32" viewBox="0 0 32 32">
<circle cx="16" cy="16" r="16" fill="#06B6D8"/>
<rect x="7" y="14.800" width="2.200" height="3" rx="1" fill="#FFE3DA"/><rect x="22.800" y="14.800" width="2.200" height="3" rx="1" fill="#FFE3DA"/>
<path d="M8.300 14.200 L9.900 14.200 L9.900 19 L22.100 19 L22.100 14.200 L23.700 14.200 Q24.600 17 24.200 20.500 Q25 22.500 23.400 23.600 Q23.300 25.600 21.200 25.800 Q20.500 27.500 18.500 27.100 Q16 29 13.500 27.100 Q11.500 27.500 10.800 25.800 Q8.700 25.600 8.600 23.600 Q7 22.500 7.800 20.500 Q7.400 17 8.300 14.200 Z" fill="#FF8B00"/>
<rect x="8.600" y="11.800" width="14.800" height="2.600" fill="#FFE9E2"/><rect x="9.900" y="11.800" width="12.200" height="7.600" fill="#FFE9E2"/>
<path d="M9.900 19 L14.300 19 Q16 20.800 17.700 19 L22.100 19 L22.100 20 L9.900 20 Z" fill="#FF8B00"/>
<path d="M8.900 10.300 Q9.300 3.500 16 3.500 Q22.700 3.500 23.100 10.300 Z" fill="#FF5630"/>
<rect x="7.200" y="10.100" width="17.600" height="2" rx="0.8" fill="#DE350B"/>
<circle cx="13.200" cy="16.700" r="0.95" fill="#344563"/><circle cx="18.800" cy="16.700" r="0.95" fill="#344563"/>
<path d="M14 21 L18 21 Q17.800 23.500 16 23.500 Q14.200 23.500 14 21 Z" fill="#344563"/>
</svg>
<span class="t" style="left:1187.90px;top:458px;font-size:14px;line-height:16px;color:#0A4FCF;letter-spacing:-0.159px;-webkit-text-stroke:0.25px #0A4FCF;">John Snow</span>
<span class="t" style="left:1312.40px;top:458px;font-size:14px;line-height:16px;color:#172B4D;letter-spacing:0.077px;">2/01/2024</span>
<div class="b" style="left:1421px;top:458px;width:18px;height:16px;background:#0052CC;border-radius:8px;"></div>
<span class="t" style="left:1426.70px;top:460px;font-size:12px;line-height:14px;color:#fff;font-weight:700;">0</span>
<svg style="left:1549px;top:456px" width="6" height="20" viewBox="0 0 6 20"><circle cx="3" cy="3" r="2.050" fill="#42526E"/><circle cx="3" cy="10" r="2.050" fill="#42526E"/><circle cx="3" cy="17" r="2.050" fill="#42526E"/></svg>
<svg style="left:18.05px;top:511.46px" width="23.20" height="23.89" viewBox="18.05 511.46 23.20 23.89"><path d="M28.90 516.07 Q29.65 514.46 30.40 516.07 L32.15 519.82 L36.12 520.39 Q37.83 520.64 36.59 521.88 L33.69 524.77 L34.40 528.87 Q34.70 530.64 33.19 529.79 L29.65 527.82 L26.11 529.79 Q24.60 530.64 24.90 528.87 L25.61 524.77 L22.71 521.88 Q21.47 520.64 23.18 520.39 L27.15 519.82 Z" fill="#fff" stroke="#C2C2C2" stroke-width="2.0" stroke-linejoin="round"/></svg>
<span class="t" style="left:113.30px;top:508px;font-size:14px;line-height:16px;color:#0052CC;letter-spacing:-0.250px;-webkit-text-stroke:0.42px #0052CC;">For John</span>
<div class="b" style="left:353px;top:512px;width:58px;height:20px;background:#F4F5F7;border-radius:3px;"></div>
<span class="t" style="left:357.60px;top:514px;font-size:13.4px;line-height:15px;color:#253858;letter-spacing:-0.905px;">GLOBAL</span>
<span class="t" style="left:473.40px;top:514px;font-size:14px;line-height:16px;color:#172B4D;letter-spacing:-0.094px;">for John by John</span>
<div class="b" style="left:598px;top:515.4px;width:46px;height:15.200000000000045px;background:#DFE1E6;border-radius:3px;"></div>
<span class="t" style="left:601.80px;top:517px;font-size:11px;line-height:12px;color:#42526E;font-weight:700;letter-spacing:0.350px;">OW...</span>
<svg style="left:668.00px;top:506.00px" width="32" height="32" viewBox="0 0 32 32">
<circle cx="16" cy="16" r="16" fill="#06B6D8"/>
<rect x="7" y="14.800" width="2.200" height="3" rx="1" fill="#FFE3DA"/><rect x="22.800" y="14.800" width="2.200" height="3" rx="1" fill="#FFE3DA"/>
<path d="M8.300 14.200 L9.900 14.200 L9.900 19 L22.100 19 L22.100 14.200 L23.700 14.200 Q24.600 17 24.200 20.500 Q25 22.500 23.400 23.600 Q23.300 25.600 21.200 25.800 Q20.500 27.500 18.500 27.100 Q16 29 13.500 27.100 Q11.500 27.500 10.800 25.800 Q8.700 25.600 8.600 23.600 Q7 22.500 7.800 20.500 Q7.400 17 8.300 14.200 Z" fill="#FF8B00"/>
<rect x="8.600" y="11.800" width="14.800" height="2.600" fill="#FFE9E2"/><rect x="9.900" y="11.800" width="12.200" height="7.600" fill="#FFE9E2"/>
<path d="M9.900 19 L14.300 19 Q16 20.800 17.700 19 L22.100 19 L22.100 20 L9.900 20 Z" fill="#FF8B00"/>
<path d="M8.900 10.300 Q9.300 3.500 16 3.500 Q22.700 3.500 23.100 10.300 Z" fill="#FF5630"/>
<rect x="7.200" y="10.100" width="17.600" height="2" rx="0.8" fill="#DE350B"/>
<circle cx="13.200" cy="16.700" r="0.95" fill="#344563"/><circle cx="18.800" cy="16.700" r="0.95" fill="#344563"/>
<path d="M14 21 L18 21 Q17.800 23.500 16 23.500 Q14.200 23.500 14 21 Z" fill="#344563"/>
</svg>
<span class="t" style="left:722.50px;top:514px;font-size:14px;line-height:16px;color:#0A4FCF;letter-spacing:-0.159px;-webkit-text-stroke:0.25px #0A4FCF;">John Snow</span>
<span class="t" style="left:831.20px;top:514px;font-size:14px;line-height:16px;color:#172B4D;letter-spacing:0.090px;">1/30/2024</span>
<svg style="left:947.00px;top:506.00px" width="32" height="32" viewBox="0 0 32 32">
<circle cx="16" cy="16" r="16" fill="#06B6D8"/>
<rect x="7" y="14.800" width="2.200" height="3" rx="1" fill="#FFE3DA"/><rect x="22.800" y="14.800" width="2.200" height="3" rx="1" fill="#FFE3DA"/>
<path d="M8.300 14.200 L9.900 14.200 L9.900 19 L22.100 19 L22.100 14.200 L23.700 14.200 Q24.600 17 24.200 20.500 Q25 22.500 23.400 23.600 Q23.300 25.600 21.200 25.800 Q20.500 27.500 18.500 27.100 Q16 29 13.500 27.100 Q11.500 27.500 10.800 25.800 Q8.700 25.600 8.600 23.600 Q7 22.500 7.800 20.500 Q7.400 17 8.300 14.200 Z" fill="#FF8B00"/>
<rect x="8.600" y="11.800" width="14.800" height="2.600" fill="#FFE9E2"/><rect x="9.900" y="11.800" width="12.200" height="7.600" fill="#FFE9E2"/>
<path d="M9.900 19 L14.300 19 Q16 20.800 17.700 19 L22.100 19 L22.100 20 L9.900 20 Z" fill="#FF8B00"/>
<path d="M8.900 10.300 Q9.300 3.500 16 3.500 Q22.700 3.500 23.100 10.300 Z" fill="#FF5630"/>
<rect x="7.200" y="10.100" width="17.600" height="2" rx="0.8" fill="#DE350B"/>
<circle cx="13.200" cy="16.700" r="0.95" fill="#344563"/><circle cx="18.800" cy="16.700" r="0.95" fill="#344563"/>
<path d="M14 21 L18 21 Q17.800 23.500 16 23.500 Q14.200 23.500 14 21 Z" fill="#344563"/>
</svg>
<span class="t" style="left:1001.70px;top:514px;font-size:14px;line-height:16px;color:#0A4FCF;letter-spacing:-0.159px;-webkit-text-stroke:0.25px #0A4FCF;">John Snow</span>
<svg style="left:1134.00px;top:506.00px" width="32" height="32" viewBox="0 0 32 32">
<circle cx="16" cy="16" r="16" fill="#06B6D8"/>
<path d="M8.600 6.800 Q5.300 6.300 5.500 9.800 Q5.800 12.500 7.900 12.900 L9.200 9 Z" fill="#FF991F"/>
<path d="M23.400 6.800 Q26.700 6.300 26.500 9.800 Q26.200 12.500 24.100 12.900 L22.800 9 Z" fill="#FF991F"/>
<path d="M8 7.200 Q8.400 6.600 9.500 6.700 L22.500 6.700 Q23.600 6.600 24 7.200 Q24.900 11.500 24.700 16.500 Q24.900 20.500 24.200 22.800 L20.300 24.100 Q19.800 27.200 16 27.300 Q12.200 27.200 11.700 24.100 L7.800 22.800 Q7.100 20.500 7.300 16.500 Q7.100 11.500 8 7.200 Z" fill="#FFAB00"/>
<path d="M12.900 7.300 L19.100 7.300 Q19 9.800 18.100 11.300 Q21.300 14 21.500 17.500 L21.500 23.800 L19 24.400 L13 24.400 L10.700 23.800 L10.700 17.500 Q10.800 14 13.900 11.300 Q13 9.800 12.900 7.300 Z" fill="#fff"/>
<circle cx="11.800" cy="12" r="0.95" fill="#42526E"/><circle cx="20.200" cy="12" r="0.95" fill="#42526E"/>
<ellipse cx="16" cy="20.200" rx="2.700" ry="1.700" fill="#344563"/>
<path d="M16 21.500 L16 24" stroke="#344563" stroke-width="0.7"/>
<path d="M14.400 24.100 Q16 25.700 17.600 24.100 Z" fill="#344563"/>
</svg>
<span class="t" style="left:1187.90px;top:514px;font-size:14px;line-height:16px;color:#0A4FCF;letter-spacing:0.217px;-webkit-text-stroke:0.25px #0A4FCF;">admin</span>
<span class="t" style="left:1312.40px;top:514px;font-size:14px;line-height:16px;color:#172B4D;letter-spacing:0.077px;">2/01/2024</span>
<div class="b" style="left:1421px;top:514px;width:18px;height:16px;background:#0052CC;border-radius:8px;"></div>
<span class="t" style="left:1426.70px;top:516px;font-size:12px;line-height:14px;color:#fff;font-weight:700;">0</span>
<svg style="left:1549px;top:512px" width="6" height="20" viewBox="0 0 6 20"><circle cx="3" cy="3" r="2.050" fill="#42526E"/><circle cx="3" cy="10" r="2.050" fill="#42526E"/><circle cx="3" cy="17" r="2.050" fill="#42526E"/></svg>
<svg style="left:1511.9px;top:514px" width="16.200" height="16" viewBox="0 0 16.200 16"><path d="M5.300 0 L10.900 0 L10.900 1 L15.600 1 Q16.200 1 16.200 1.700 L16.200 3.100 L0 3.100 L0 1.700 Q0 1 0.600 1 L5.300 1 Z" fill="#42526E"/><path d="M1.100 4.100 L15.100 4.100 L13.200 15.300 Q13.100 16 12.400 16 L3.800 16 Q3.100 16 3.000 15.300 Z" fill="#42526E"/></svg>
<svg style="left:19.25px;top:567.70px" width="22.00" height="22.80" viewBox="19.25 567.70 22.00 22.80"><path d="M29.69 571.99 Q30.25 570.70 30.81 571.99 L32.48 575.87 L36.51 576.35 Q37.86 576.50 36.86 577.46 L33.86 580.33 L34.68 584.51 Q34.95 585.90 33.78 585.19 L30.25 583.09 L26.72 585.19 Q25.55 585.90 25.82 584.51 L26.64 580.33 L23.64 577.46 Q22.64 576.50 23.99 576.35 L28.02 575.87 Z" fill="#FFAB00" stroke="#FFAB00" stroke-width="2.0" stroke-linejoin="round"/></svg>
<span class="t" style="left:113.30px;top:564px;font-size:14px;line-height:16px;color:#0052CC;letter-spacing:-0.102px;-webkit-text-stroke:0.42px #0052CC;">For Bugs by John</span>
<div class="b" style="left:353px;top:568px;width:64px;height:20px;background:#F4F5F7;border-radius:3px;"></div>
<span class="t" style="left:357.60px;top:569px;font-size:14px;line-height:16px;color:#253858;letter-spacing:-0.244px;">3 owners</span>
<span class="t" style="left:473.40px;top:570px;font-size:14px;line-height:16px;color:#172B4D;letter-spacing:-0.094px;">for John by John</span>
<div class="b" style="left:598px;top:571.4px;width:46px;height:15.200000000000045px;background:#DFE1E6;border-radius:3px;"></div>
<span class="t" style="left:601.80px;top:573px;font-size:11px;line-height:12px;color:#42526E;font-weight:700;letter-spacing:0.350px;">OW...</span>
<svg style="left:668.00px;top:562.00px" width="32" height="32" viewBox="0 0 32 32">
<circle cx="16" cy="16" r="16" fill="#06B6D8"/>
<rect x="7" y="14.800" width="2.200" height="3" rx="1" fill="#FFE3DA"/><rect x="22.800" y="14.800" width="2.200" height="3" rx="1" fill="#FFE3DA"/>
<path d="M8.300 14.200 L9.900 14.200 L9.900 19 L22.100 19 L22.100 14.200 L23.700 14.200 Q24.600 17 24.200 20.500 Q25 22.500 23.400 23.600 Q23.300 25.600 21.200 25.800 Q20.500 27.500 18.500 27.100 Q16 29 13.500 27.100 Q11.500 27.500 10.800 25.800 Q8.700 25.600 8.600 23.600 Q7 22.500 7.800 20.500 Q7.400 17 8.300 14.200 Z" fill="#FF8B00"/>
<rect x="8.600" y="11.800" width="14.800" height="2.600" fill="#FFE9E2"/><rect x="9.900" y="11.800" width="12.200" height="7.600" fill="#FFE9E2"/>
<path d="M9.900 19 L14.300 19 Q16 20.800 17.700 19 L22.100 19 L22.100 20 L9.900 20 Z" fill="#FF8B00"/>
<path d="M8.900 10.300 Q9.300 3.500 16 3.500 Q22.700 3.500 23.100 10.300 Z" fill="#FF5630"/>
<rect x="7.200" y="10.100" width="17.600" height="2" rx="0.8" fill="#DE350B"/>
<circle cx="13.200" cy="16.700" r="0.95" fill="#344563"/><circle cx="18.800" cy="16.700" r="0.95" fill="#344563"/>
<path d="M14 21 L18 21 Q17.800 23.500 16 23.500 Q14.200 23.500 14 21 Z" fill="#344563"/>
</svg>
<span class="t" style="left:722.50px;top:570px;font-size:14px;line-height:16px;color:#0A4FCF;letter-spacing:-0.159px;-webkit-text-stroke:0.25px #0A4FCF;">John Snow</span>
<span class="t" style="left:831.20px;top:570px;font-size:14px;line-height:16px;color:#172B4D;letter-spacing:0.090px;">1/30/2024</span>
<svg style="left:947.00px;top:562.00px" width="32" height="32" viewBox="0 0 32 32">
<circle cx="16" cy="16" r="16" fill="#06B6D8"/>
<rect x="7" y="14.800" width="2.200" height="3" rx="1" fill="#FFE3DA"/><rect x="22.800" y="14.800" width="2.200" height="3" rx="1" fill="#FFE3DA"/>
<path d="M8.300 14.200 L9.900 14.200 L9.900 19 L22.100 19 L22.100 14.200 L23.700 14.200 Q24.600 17 24.200 20.500 Q25 22.500 23.400 23.600 Q23.300 25.600 21.200 25.800 Q20.500 27.500 18.500 27.100 Q16 29 13.500 27.100 Q11.500 27.500 10.800 25.800 Q8.700 25.600 8.600 23.600 Q7 22.500 7.800 20.500 Q7.400 17 8.300 14.200 Z" fill="#FF8B00"/>
<rect x="8.600" y="11.800" width="14.800" height="2.600" fill="#FFE9E2"/><rect x="9.900" y="11.800" width="12.200" height="7.600" fill="#FFE9E2"/>
<path d="M9.900 19 L14.300 19 Q16 20.800 17.700 19 L22.100 19 L22.100 20 L9.900 20 Z" fill="#FF8B00"/>
<path d="M8.900 10.300 Q9.300 3.500 16 3.500 Q22.700 3.500 23.100 10.300 Z" fill="#FF5630"/>
<rect x="7.200" y="10.100" width="17.600" height="2" rx="0.8" fill="#DE350B"/>
<circle cx="13.200" cy="16.700" r="0.95" fill="#344563"/><circle cx="18.800" cy="16.700" r="0.95" fill="#344563"/>
<path d="M14 21 L18 21 Q17.800 23.500 16 23.500 Q14.200 23.500 14 21 Z" fill="#344563"/>
</svg>
<span class="t" style="left:1001.70px;top:570px;font-size:14px;line-height:16px;color:#0A4FCF;letter-spacing:-0.159px;-webkit-text-stroke:0.25px #0A4FCF;">John Snow</span>
<svg style="left:1134.00px;top:562.00px" width="32" height="32" viewBox="0 0 32 32">
<circle cx="16" cy="16" r="16" fill="#06B6D8"/>
<rect x="7" y="14.800" width="2.200" height="3" rx="1" fill="#FFE3DA"/><rect x="22.800" y="14.800" width="2.200" height="3" rx="1" fill="#FFE3DA"/>
<path d="M8.300 14.200 L9.900 14.200 L9.900 19 L22.100 19 L22.100 14.200 L23.700 14.200 Q24.600 17 24.200 20.500 Q25 22.500 23.400 23.600 Q23.300 25.600 21.200 25.800 Q20.500 27.500 18.500 27.100 Q16 29 13.500 27.100 Q11.500 27.500 10.800 25.800 Q8.700 25.600 8.600 23.600 Q7 22.500 7.800 20.500 Q7.400 17 8.300 14.200 Z" fill="#FF8B00"/>
<rect x="8.600" y="11.800" width="14.800" height="2.600" fill="#FFE9E2"/><rect x="9.900" y="11.800" width="12.200" height="7.600" fill="#FFE9E2"/>
<path d="M9.900 19 L14.300 19 Q16 20.800 17.700 19 L22.100 19 L22.100 20 L9.900 20 Z" fill="#FF8B00"/>
<path d="M8.900 10.300 Q9.300 3.500 16 3.500 Q22.700 3.500 23.100 10.300 Z" fill="#FF5630"/>
<rect x="7.200" y="10.100" width="17.600" height="2" rx="0.8" fill="#DE350B"/>
<circle cx="13.200" cy="16.700" r="0.95" fill="#344563"/><circle cx="18.800" cy="16.700" r="0.95" fill="#344563"/>
<path d="M14 21 L18 21 Q17.800 23.500 16 23.500 Q14.200 23.500 14 21 Z" fill="#344563"/>
</svg>
<span class="t" style="left:1187.90px;top:570px;font-size:14px;line-height:16px;color:#0A4FCF;letter-spacing:-0.159px;-webkit-text-stroke:0.25px #0A4FCF;">John Snow</span>
<span class="t" style="left:1312.40px;top:570px;font-size:14px;line-height:16px;color:#172B4D;letter-spacing:0.077px;">2/01/2024</span>
<div class="b" style="left:1421px;top:570px;width:18px;height:16px;background:#0052CC;border-radius:8px;"></div>
<span class="t" style="left:1426.70px;top:572px;font-size:12px;line-height:14px;color:#fff;font-weight:700;">1</span>
<svg style="left:1549px;top:568px" width="6" height="20" viewBox="0 0 6 20"><circle cx="3" cy="3" r="2.050" fill="#42526E"/><circle cx="3" cy="10" r="2.050" fill="#42526E"/><circle cx="3" cy="17" r="2.050" fill="#42526E"/></svg>
<svg style="left:1511.9px;top:570px" width="16.200" height="16" viewBox="0 0 16.200 16"><path d="M5.300 0 L10.900 0 L10.900 1 L15.600 1 Q16.200 1 16.200 1.700 L16.200 3.100 L0 3.100 L0 1.700 Q0 1 0.600 1 L5.300 1 Z" fill="#42526E"/><path d="M1.100 4.100 L15.100 4.100 L13.200 15.300 Q13.100 16 12.400 16 L3.800 16 Q3.100 16 3.000 15.300 Z" fill="#42526E"/></svg>
<svg style="left:18.05px;top:629.46px" width="23.20" height="23.89" viewBox="18.05 629.46 23.20 23.89"><path d="M28.90 634.07 Q29.65 632.46 30.40 634.07 L32.15 637.82 L36.12 638.39 Q37.83 638.64 36.59 639.88 L33.69 642.77 L34.40 646.87 Q34.70 648.64 33.19 647.79 L29.65 645.82 L26.11 647.79 Q24.60 648.64 24.90 646.87 L25.61 642.77 L22.71 639.88 Q21.47 638.64 23.18 638.39 L27.15 637.82 Z" fill="#fff" stroke="#C2C2C2" stroke-width="2.0" stroke-linejoin="round"/></svg>
<span class="t" style="left:113.30px;top:618px;font-size:14px;line-height:16px;color:#0052CC;letter-spacing:-0.407px;-webkit-text-stroke:0.42px #0052CC;">3.0.1 second</span>
<span class="t" style="left:111.00px;top:656px;font-size:11px;line-height:12px;color:#6B778C;letter-spacing:-0.317px;">3.0.1 second</span>
<div class="b" style="left:353px;top:630px;width:85px;height:20px;background:#F4F5F7;border-radius:3px;"></div>
<span class="t" style="left:357.60px;top:631px;font-size:14px;line-height:16px;color:#253858;letter-spacing:-0.370px;">3.0.1 second</span>
<span class="t" style="left:473.40px;top:622px;font-size:14px;line-height:16px;color:#172B4D;letter-spacing:-0.164px;">software users</span>
<span class="t" style="left:473.40px;top:642px;font-size:14px;line-height:16px;color:#172B4D;letter-spacing:0.323px;">group</span>
<div class="b" style="left:598px;top:633.4px;width:46px;height:15.200000000000045px;background:#DFE1E6;border-radius:3px;"></div>
<span class="t" style="left:601.80px;top:635px;font-size:11px;line-height:12px;color:#42526E;font-weight:700;letter-spacing:0.350px;">OW...</span>
<svg style="left:668.00px;top:624.00px" width="32" height="32" viewBox="0 0 32 32">
<circle cx="16" cy="16" r="16" fill="#06B6D8"/>
<path d="M8.600 6.800 Q5.300 6.300 5.500 9.800 Q5.800 12.500 7.900 12.900 L9.200 9 Z" fill="#FF991F"/>
<path d="M23.400 6.800 Q26.700 6.300 26.500 9.800 Q26.200 12.500 24.100 12.900 L22.800 9 Z" fill="#FF991F"/>
<path d="M8 7.200 Q8.400 6.600 9.500 6.700 L22.500 6.700 Q23.600 6.600 24 7.200 Q24.900 11.500 24.700 16.500 Q24.900 20.500 24.200 22.800 L20.300 24.100 Q19.800 27.200 16 27.300 Q12.200 27.200 11.700 24.100 L7.800 22.800 Q7.100 20.500 7.300 16.500 Q7.100 11.500 8 7.200 Z" fill="#FFAB00"/>
<path d="M12.900 7.300 L19.100 7.300 Q19 9.800 18.100 11.300 Q21.300 14 21.500 17.500 L21.500 23.800 L19 24.400 L13 24.400 L10.700 23.800 L10.700 17.500 Q10.800 14 13.900 11.300 Q13 9.800 12.900 7.300 Z" fill="#fff"/>
<circle cx="11.800" cy="12" r="0.95" fill="#42526E"/><circle cx="20.200" cy="12" r="0.95" fill="#42526E"/>
<ellipse cx="16" cy="20.200" rx="2.700" ry="1.700" fill="#344563"/>
<path d="M16 21.500 L16 24" stroke="#344563" stroke-width="0.7"/>
<path d="M14.400 24.100 Q16 25.700 17.600 24.100 Z" fill="#344563"/>
</svg>
<span class="t" style="left:722.50px;top:632px;font-size:14px;line-height:16px;color:#0A4FCF;letter-spacing:0.217px;-webkit-text-stroke:0.25px #0A4FCF;">admin</span>
<span class="t" style="left:831.20px;top:632px;font-size:14px;line-height:16px;color:#172B4D;letter-spacing:0.090px;">1/30/2024</span>
<svg style="left:947.00px;top:624.00px" width="32" height="32" viewBox="0 0 32 32">
<circle cx="16" cy="16" r="16" fill="#06B6D8"/>
<path d="M8.600 6.800 Q5.300 6.300 5.500 9.800 Q5.800 12.500 7.900 12.900 L9.200 9 Z" fill="#FF991F"/>
<path d="M23.400 6.800 Q26.700 6.300 26.500 9.800 Q26.200 12.500 24.100 12.900 L22.800 9 Z" fill="#FF991F"/>
<path d="M8 7.200 Q8.400 6.600 9.500 6.700 L22.500 6.700 Q23.600 6.600 24 7.200 Q24.900 11.500 24.700 16.500 Q24.900 20.500 24.200 22.800 L20.300 24.100 Q19.800 27.200 16 27.300 Q12.200 27.200 11.700 24.100 L7.800 22.800 Q7.100 20.500 7.300 16.500 Q7.100 11.500 8 7.200 Z" fill="#FFAB00"/>
<path d="M12.900 7.300 L19.100 7.300 Q19 9.800 18.100 11.300 Q21.300 14 21.500 17.500 L21.500 23.800 L19 24.400 L13 24.400 L10.700 23.800 L10.700 17.500 Q10.800 14 13.900 11.300 Q13 9.800 12.900 7.300 Z" fill="#fff"/>
<circle cx="11.800" cy="12" r="0.95" fill="#42526E"/><circle cx="20.200" cy="12" r="0.95" fill="#42526E"/>
<ellipse cx="16" cy="20.200" rx="2.700" ry="1.700" fill="#344563"/>
<path d="M16 21.500 L16 24" stroke="#344563" stroke-width="0.7"/>
<path d="M14.400 24.100 Q16 25.700 17.600 24.100 Z" fill="#344563"/>
</svg>
<span class="t" style="left:1001.70px;top:632px;font-size:14px;line-height:16px;color:#0A4FCF;letter-spacing:0.217px;-webkit-text-stroke:0.25px #0A4FCF;">admin</span>
<svg style="left:1134.00px;top:624.00px" width="32" height="32" viewBox="0 0 32 32">
<circle cx="16" cy="16" r="16" fill="#06B6D8"/>
<path d="M8.600 6.800 Q5.300 6.300 5.500 9.800 Q5.800 12.500 7.900 12.900 L9.200 9 Z" fill="#FF991F"/>
<path d="M23.400 6.800 Q26.700 6.300 26.500 9.800 Q26.200 12.500 24.100 12.900 L22.800 9 Z" fill="#FF991F"/>
<path d="M8 7.200 Q8.400 6.600 9.500 6.700 L22.500 6.700 Q23.600 6.600 24 7.200 Q24.900 11.500 24.700 16.500 Q24.900 20.500 24.200 22.800 L20.300 24.100 Q19.800 27.200 16 27.300 Q12.200 27.200 11.700 24.100 L7.800 22.800 Q7.100 20.500 7.300 16.500 Q7.100 11.500 8 7.200 Z" fill="#FFAB00"/>
<path d="M12.900 7.300 L19.100 7.300 Q19 9.800 18.100 11.300 Q21.300 14 21.500 17.500 L21.500 23.800 L19 24.400 L13 24.400 L10.700 23.800 L10.700 17.500 Q10.800 14 13.900 11.300 Q13 9.800 12.900 7.300 Z" fill="#fff"/>
<circle cx="11.800" cy="12" r="0.95" fill="#42526E"/><circle cx="20.200" cy="12" r="0.95" fill="#42526E"/>
<ellipse cx="16" cy="20.200" rx="2.700" ry="1.700" fill="#344563"/>
<path d="M16 21.500 L16 24" stroke="#344563" stroke-width="0.7"/>
<path d="M14.400 24.100 Q16 25.700 17.600 24.100 Z" fill="#344563"/>
</svg>
<span class="t" style="left:1187.90px;top:632px;font-size:14px;line-height:16px;color:#0A4FCF;letter-spacing:0.217px;-webkit-text-stroke:0.25px #0A4FCF;">admin</span>
<span class="t" style="left:1312.40px;top:632px;font-size:14px;line-height:16px;color:#172B4D;letter-spacing:0.077px;">1/30/2024</span>
<div class="b" style="left:1421px;top:632px;width:18px;height:16px;background:#0052CC;border-radius:8px;"></div>
<span class="t" style="left:1426.70px;top:634px;font-size:12px;line-height:14px;color:#fff;font-weight:700;">0</span>
<svg style="left:1549px;top:630px" width="6" height="20" viewBox="0 0 6 20"><circle cx="3" cy="3" r="2.050" fill="#42526E"/><circle cx="3" cy="10" r="2.050" fill="#42526E"/><circle cx="3" cy="17" r="2.050" fill="#42526E"/></svg>
<div class="b" style="left:1398px;top:378px;width:180px;height:52px;background:#fff;border-radius:3px;box-shadow:0 4px 8px -2px rgba(9,30,66,.25),0 0 1px rgba(9,30,66,.31)"></div>
<svg style="left:1416px;top:392px" width="22" height="24" viewBox="1416 392 22 24"><path d="M1428.800 396.200 L1421.700 396.200 Q1420.100 396.200 1420.100 397.800 L1420.100 407.600" fill="none" stroke="#172B4D" stroke-width="2"/><rect x="1423.100" y="398.900" width="9.900" height="13.100" rx="1.300" fill="none" stroke="#172B4D" stroke-width="2"/></svg>
<span class="t" style="left:1450.10px;top:396px;font-size:14px;line-height:16px;color:#42526E;letter-spacing:-0.161px;">Copy Template</span>
</body></html>
